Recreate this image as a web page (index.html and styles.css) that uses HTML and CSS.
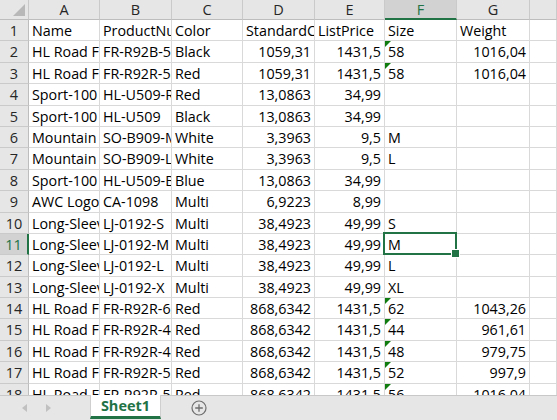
FILE: index.html
```html
<!DOCTYPE html>
<html>
<head>
<meta charset="utf-8">
<link rel="stylesheet" href="styles.css">
</head>
<body>
<div class="app">
  <div class="sheet">
    <div class="corner"><span class="tri"></span></div>
    <div class="ch">A</div><div class="ch">B</div><div class="ch">C</div><div class="ch">D</div><div class="ch">E</div><div class="ch ch-sel">F</div><div class="ch">G</div><div class="ch"></div>

    <div class="rh">1</div><div class="c">Name</div><div class="c">ProductNumber</div><div class="c">Color</div><div class="c">StandardCost</div><div class="c">ListPrice</div><div class="c">Size</div><div class="c">Weight</div><div class="c"></div>
    <div class="rh">2</div><div class="c">HL Road Frame - Black, 58</div><div class="c">FR-R92B-58</div><div class="c">Black</div><div class="c n">1059,31</div><div class="c n">1431,5</div><div class="c t">58</div><div class="c n">1016,04</div><div class="c"></div>
    <div class="rh">3</div><div class="c">HL Road Frame - Red, 58</div><div class="c">FR-R92R-58</div><div class="c">Red</div><div class="c n">1059,31</div><div class="c n">1431,5</div><div class="c t">58</div><div class="c n">1016,04</div><div class="c"></div>
    <div class="rh">4</div><div class="c">Sport-100 Helmet, Red</div><div class="c">HL-U509-R</div><div class="c">Red</div><div class="c n">13,0863</div><div class="c n">34,99</div><div class="c"></div><div class="c"></div><div class="c"></div>
    <div class="rh">5</div><div class="c">Sport-100 Helmet, Black</div><div class="c">HL-U509</div><div class="c">Black</div><div class="c n">13,0863</div><div class="c n">34,99</div><div class="c"></div><div class="c"></div><div class="c"></div>
    <div class="rh">6</div><div class="c">Mountain Bike Socks, M</div><div class="c">SO-B909-M</div><div class="c">White</div><div class="c n">3,3963</div><div class="c n">9,5</div><div class="c">M</div><div class="c"></div><div class="c"></div>
    <div class="rh">7</div><div class="c">Mountain Bike Socks, L</div><div class="c">SO-B909-L</div><div class="c">White</div><div class="c n">3,3963</div><div class="c n">9,5</div><div class="c">L</div><div class="c"></div><div class="c"></div>
    <div class="rh">8</div><div class="c">Sport-100 Helmet, Blue</div><div class="c">HL-U509-B</div><div class="c">Blue</div><div class="c n">13,0863</div><div class="c n">34,99</div><div class="c"></div><div class="c"></div><div class="c"></div>
    <div class="rh">9</div><div class="c">AWC Logo Cap</div><div class="c">CA-1098</div><div class="c">Multi</div><div class="c n">6,9223</div><div class="c n">8,99</div><div class="c"></div><div class="c"></div><div class="c"></div>
    <div class="rh">10</div><div class="c">Long-Sleeve Logo Jersey, S</div><div class="c">LJ-0192-S</div><div class="c">Multi</div><div class="c n">38,4923</div><div class="c n">49,99</div><div class="c">S</div><div class="c"></div><div class="c"></div>
    <div class="rh rh-sel">11</div><div class="c">Long-Sleeve Logo Jersey, M</div><div class="c">LJ-0192-M</div><div class="c">Multi</div><div class="c n">38,4923</div><div class="c n">49,99</div><div class="c sel">M</div><div class="c"></div><div class="c"></div>
    <div class="rh">12</div><div class="c">Long-Sleeve Logo Jersey, L</div><div class="c">LJ-0192-L</div><div class="c">Multi</div><div class="c n">38,4923</div><div class="c n">49,99</div><div class="c">L</div><div class="c"></div><div class="c"></div>
    <div class="rh">13</div><div class="c">Long-Sleeve Logo Jersey, XL</div><div class="c">LJ-0192-X</div><div class="c">Multi</div><div class="c n">38,4923</div><div class="c n">49,99</div><div class="c">XL</div><div class="c"></div><div class="c"></div>
    <div class="rh">14</div><div class="c">HL Road Frame - Red, 62</div><div class="c">FR-R92R-62</div><div class="c">Red</div><div class="c n">868,6342</div><div class="c n">1431,5</div><div class="c t">62</div><div class="c n">1043,26</div><div class="c"></div>
    <div class="rh">15</div><div class="c">HL Road Frame - Red, 44</div><div class="c">FR-R92R-44</div><div class="c">Red</div><div class="c n">868,6342</div><div class="c n">1431,5</div><div class="c t">44</div><div class="c n">961,61</div><div class="c"></div>
    <div class="rh">16</div><div class="c">HL Road Frame - Red, 48</div><div class="c">FR-R92R-48</div><div class="c">Red</div><div class="c n">868,6342</div><div class="c n">1431,5</div><div class="c t">48</div><div class="c n">979,75</div><div class="c"></div>
    <div class="rh">17</div><div class="c">HL Road Frame - Red, 52</div><div class="c">FR-R92R-52</div><div class="c">Red</div><div class="c n">868,6342</div><div class="c n">1431,5</div><div class="c t">52</div><div class="c n">997,9</div><div class="c"></div>
    <div class="rh">18</div><div class="c">HL Road Frame - Red, 56</div><div class="c">FR-R92R-56</div><div class="c">Red</div><div class="c n">868,6342</div><div class="c n">1431,5</div><div class="c t">56</div><div class="c n">1016,04</div><div class="c"></div>
  </div>
  <div class="tabbar">
    <div class="nav"><span class="arr arr-l"></span><span class="arr arr-r"></span></div>
    <div class="tab">Sheet1</div>
    <div class="add">
      <svg width="16" height="16" viewBox="0 0 16 16"><circle cx="8" cy="8" r="7" fill="none" stroke="#6e6e6e" stroke-width="1.2"/><path d="M8 4.2v7.6M4.2 8h7.6" stroke="#6e6e6e" stroke-width="1.3"/></svg>
    </div>
  </div>
</div>
</body>
</html>
```

FILE: styles.css
```css
* { box-sizing: border-box; }
html, body { margin: 0; padding: 0; background: #fff; }
.app {
  width: 557px;
  height: 420px;
  display: flex;
  flex-direction: column;
  overflow: hidden;
  font-family: "Open Sans", "Liberation Sans", sans-serif;
  font-size: 14.3px;
  color: #000;
}
.sheet {
  height: 395px;
  flex: none;
  overflow: hidden;
  display: grid;
  grid-template-columns: 29px 71px 72px 71px 72px 70px 72px 73px 1fr;
  grid-template-rows: 20px;
  grid-auto-rows: 21.4px;
}
.corner {
  background: #e6e6e6;
  border-right: 1px solid #c8c8c8;
  border-bottom: 1px solid #bdbdbd;
  position: relative;
}
.tri {
  position: absolute;
  right: 3px;
  bottom: 3px;
  width: 0;
  height: 0;
  border-left: 12px solid transparent;
  border-bottom: 12px solid #b8b8b8;
}
.ch {
  background: #e6e6e6;
  border-right: 1px solid #cacaca;
  border-bottom: 1px solid #bdbdbd;
  text-align: center;
  line-height: 20px;
  color: #262626;
  font-size: 14.5px;
}
.ch-sel {
  background: #d2d2d2;
  color: #217346;
  border-bottom: 2px solid #217346;
  line-height: 19px;
}
.rh {
  background: #e6e6e6;
  border-right: 1px solid #bdbdbd;
  border-bottom: 1px solid #cacaca;
  text-align: center;
  line-height: 21px;
  color: #262626;
  font-size: 14.5px;
}
.rh-sel {
  background: #d2d2d2;
  color: #217346;
  border-right: 2px solid #217346;
}
.c {
  border-right: 1px solid #d9d9d9;
  border-bottom: 1px solid #d9d9d9;
  white-space: nowrap;
  overflow: hidden;
  padding: 0 3px;
  line-height: 21px;
  position: relative;
}
.n { text-align: right; }
.t::before {
  content: "";
  position: absolute;
  left: 0;
  top: 0;
  width: 0;
  height: 0;
  border-top: 6px solid #107c10;
  border-right: 6px solid transparent;
}
.sel { overflow: visible; }
.sel::after {
  content: "";
  position: absolute;
  left: -2px;
  top: -2px;
  right: -1px;
  bottom: -1px;
  border: 2px solid #217346;
}
.sel::before {
  content: "";
  position: absolute;
  right: -4px;
  bottom: -4px;
  width: 7px;
  height: 7px;
  background: #217346;
  border: 1px solid #fff;
  z-index: 2;
}
.tabbar {
  flex: 1;
  background: #e6e6e6;
  border-top: 1px solid #c8c8c8;
  display: flex;
  align-items: stretch;
}
.nav {
  width: 90px;
  display: flex;
  align-items: center;
  padding-left: 22px;
  gap: 19px;
}
.arr { width: 0; height: 0; border-top: 4px solid transparent; border-bottom: 4px solid transparent; }
.arr-l { border-right: 5px solid #c0c0c0; }
.arr-r { border-left: 5px solid #c0c0c0; }
.tab {
  width: 71px;
  background: #fff;
  border-left: 1px solid #cfcfcf;
  border-right: 1px solid #cfcfcf;
  border-bottom: 3px solid #217346;
  color: #217346;
  font-weight: bold;
  font-size: 14.5px;
  text-align: center;
  line-height: 21px;
  margin-top: -1px;
  margin-bottom: 1px;
}
.add {
  margin-left: 30px;
  display: flex;
  align-items: center;
}
.add svg { display: block; }
```
